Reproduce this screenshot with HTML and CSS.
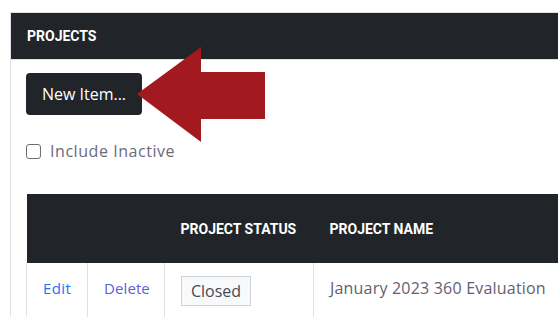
FILE: index.html
```html
<!DOCTYPE html>
<html>
<head>
<meta charset="utf-8">
<link rel="stylesheet" href="styles.css">
</head>
<body>
<div class="page">
  <div class="card">
    <div class="card-header">Projects</div>
    <div class="card-body">
      <button class="btn-new">New Item...</button>
      <label class="check">
        <span class="box"></span>
        <span class="check-label">Include Inactive</span>
      </label>
      <table class="grid">
        <colgroup>
          <col class="c1"><col class="c2"><col class="c3"><col class="c4">
        </colgroup>
        <thead>
          <tr><th></th><th></th><th>Project Status</th><th>Project Name</th></tr>
        </thead>
        <tbody>
          <tr>
            <td><a class="lnk">Edit</a></td>
            <td><a class="lnk visited">Delete</a></td>
            <td><span class="badge">Closed</span></td>
            <td class="name">January 2023 360 Evaluation</td>
          </tr>
        </tbody>
      </table>
    </div>
  </div>
  <svg class="arrow" width="558" height="317" viewBox="0 0 558 317">
    <polygon points="137,94 201,47 201,72 265,72 265,119 201,119 201,142" fill="#a31920"/>
  </svg>
</div>
</body>
</html>
```

FILE: styles.css
```css
html, body {
  margin: 0;
  padding: 0;
  background: #fff;
  overflow: hidden;
}
.page {
  position: relative;
  width: 558px;
  height: 317px;
  overflow: hidden;
  padding: 12px 0 0 10px;
  box-sizing: border-box;
  font-family: "Open Sans", "Liberation Sans", sans-serif;
}
.card {
  width: 620px;
  border: 1px solid #dfe1e3;
  border-right: none;
  height: 400px;
}
.card-header {
  background: #212529;
  color: #fff;
  height: 47px;
  box-sizing: border-box;
  border-bottom: 1px solid #dfe1e3;
  padding: 0 16px;
  display: flex;
  align-items: center;
  font-family: Roboto, "Liberation Sans", sans-serif;
  font-weight: 700;
  font-size: 14px;
  text-transform: uppercase;
}
.card-body {
  padding: 13px 0 0 15px;
  display: flex;
  flex-direction: column;
  align-items: flex-start;
}
.btn-new {
  width: 116px;
  height: 42px;
  background: #212529;
  color: #fff;
  border: none;
  border-radius: 4px;
  font-family: "Open Sans", "Liberation Sans", sans-serif;
  font-size: 16px;
  padding: 0;
  display: flex;
  align-items: center;
  justify-content: center;
}
.check {
  margin-top: 28px;
  display: flex;
  align-items: center;
  gap: 9px;
  height: 16px;
}
.box {
  width: 13px;
  height: 13px;
  border: 1px solid #6f6f6f;
  border-radius: 3px;
  background: #fff;
}
.check-label {
  font-size: 16px;
  letter-spacing: 0.55px;
  color: #6b6a7c;
}
.grid {
  margin-top: 35px;
  border-collapse: collapse;
  width: 560px;
  table-layout: fixed;
}
.c1 { width: 61px; }
.c2 { width: 77px; }
.c3 { width: 149px; }
.grid th {
  background: #212529;
  color: #fff;
  height: 69px;
  padding: 0 16px;
  text-align: left;
  font-family: Roboto, "Liberation Sans", sans-serif;
  font-weight: 700;
  font-size: 14px;
  text-transform: uppercase;
  white-space: nowrap;
}
.grid td {
  border: 1px solid #dfe1e3;
  border-top: none;
  padding: 13px 16px 20px;
  vertical-align: top;
  font-size: 15px;
  line-height: 20px;
  white-space: nowrap;
  height: 60px;
}
.lnk {
  display: inline-block;
  margin-top: 2px;
  color: #1f74f5;
  font-size: 15px;
  letter-spacing: 0.4px;
}
.lnk.visited {
  color: #5a5fe0;
  letter-spacing: 0.1px;
}
.badge {
  display: inline-block;
  vertical-align: top;
  border: 1px solid #cfd2d6;
  background: #f8f9fa;
  color: #464b52;
  font-size: 16px;
  padding: 4px 9px 4px;
  line-height: 20px;
}
.name {
  color: #62616f;
  font-size: 16px !important;
  letter-spacing: 0.2px;
  padding-top: 15px !important;
}
.arrow {
  position: absolute;
  left: 0;
  top: 0;
  pointer-events: none;
}
```
